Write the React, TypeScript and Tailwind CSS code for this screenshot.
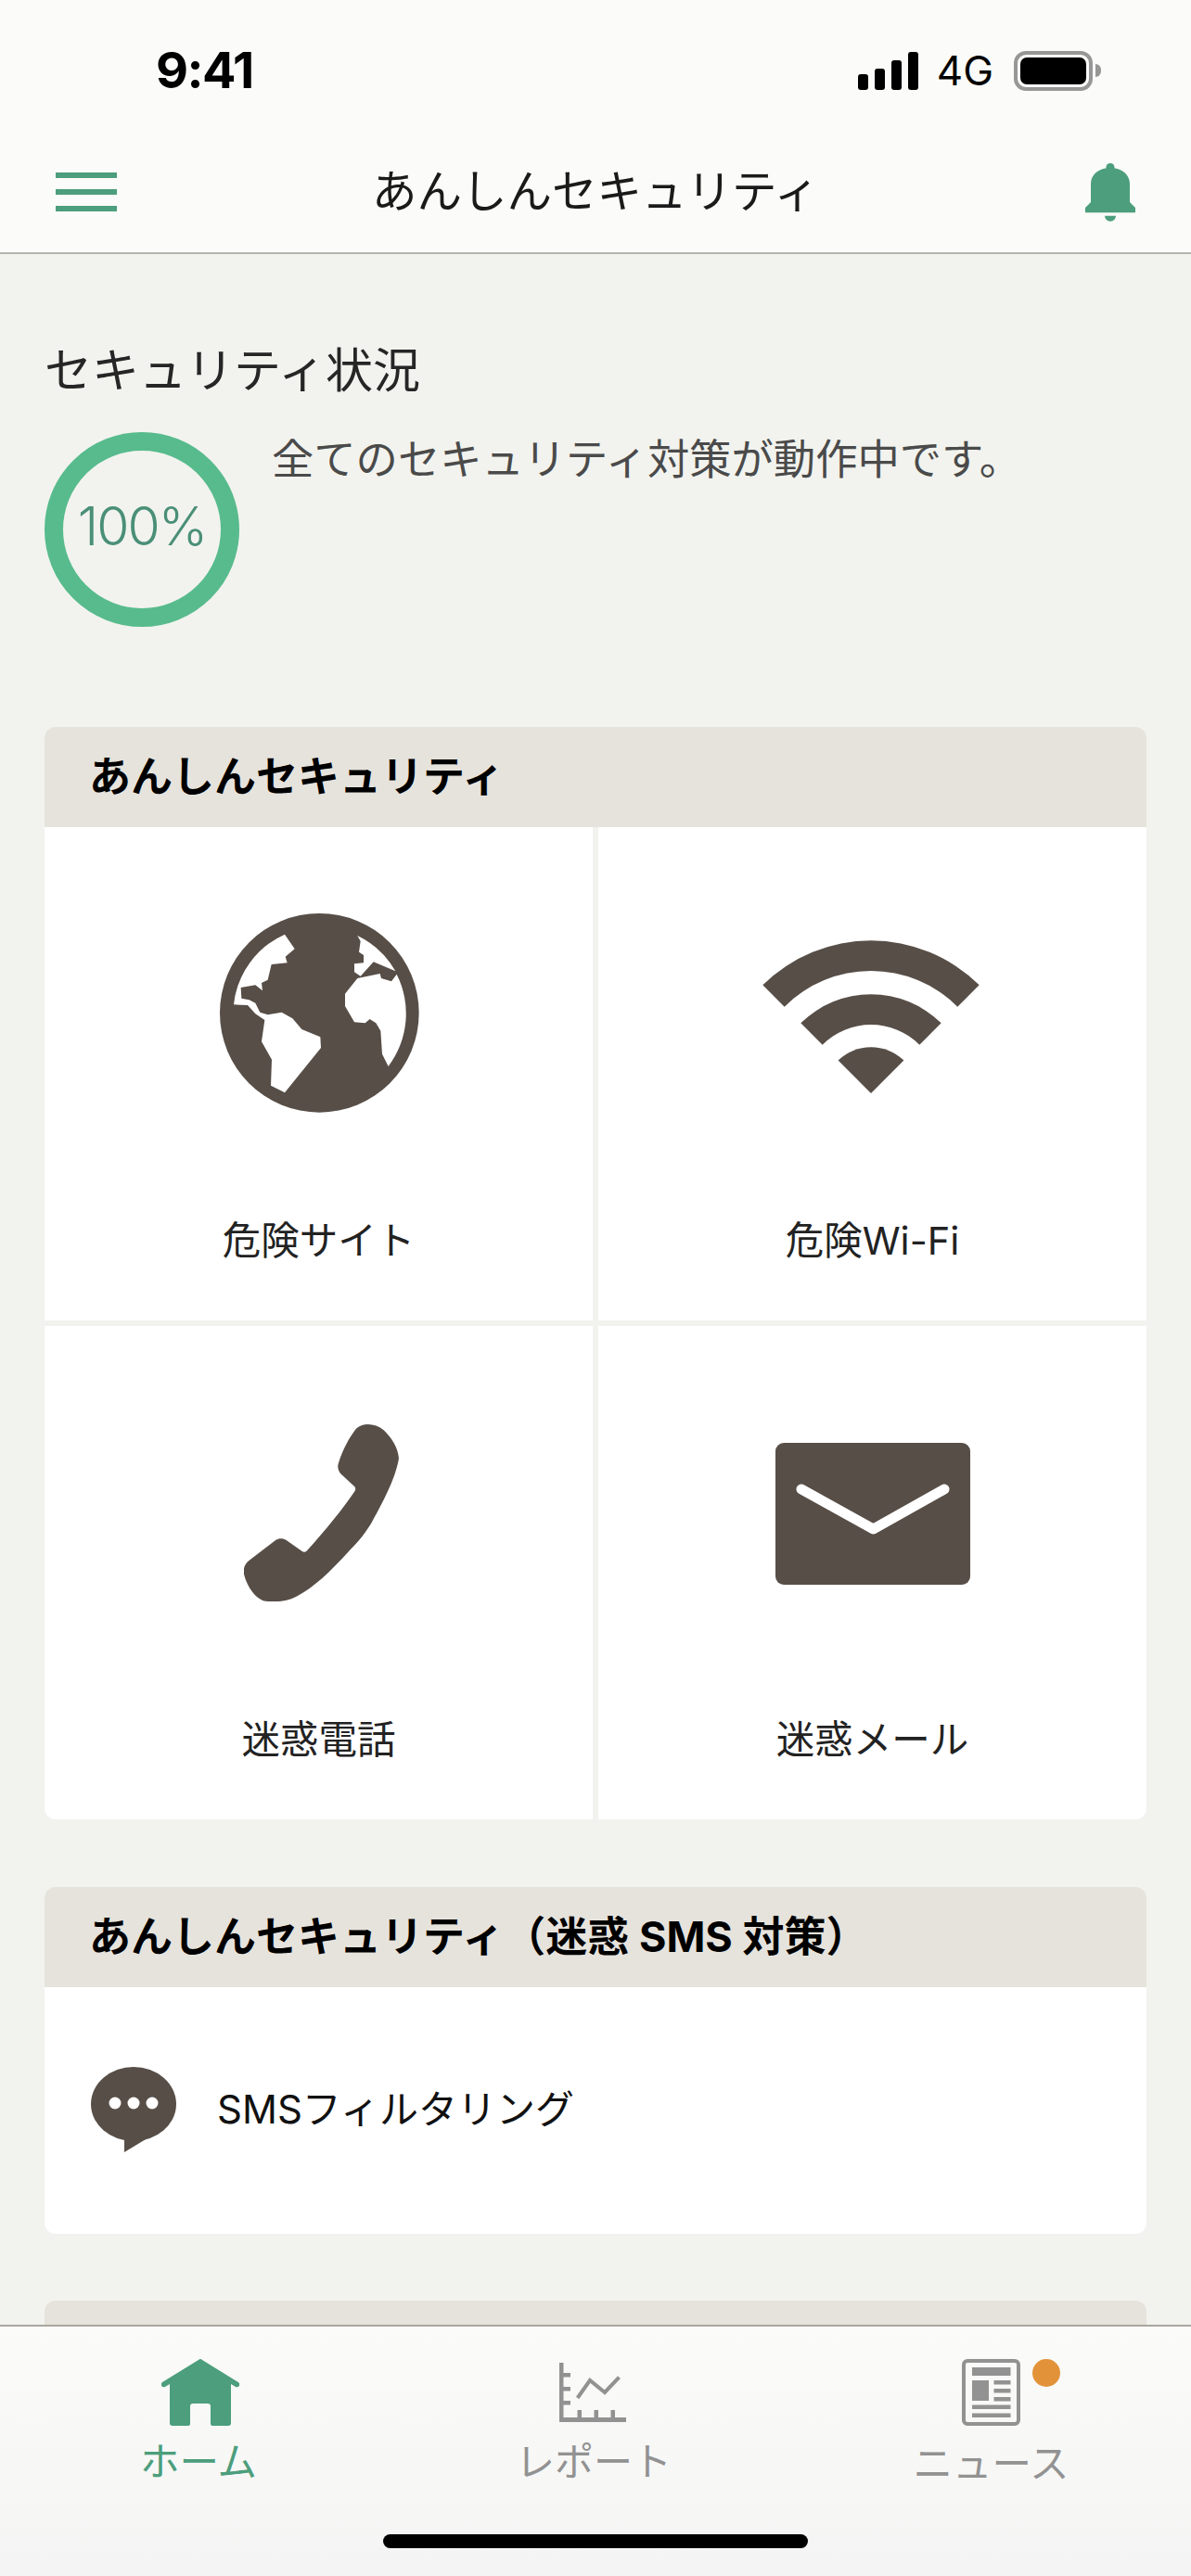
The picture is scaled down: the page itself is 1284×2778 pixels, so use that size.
import React from 'react';

const BROWN = '#574e47';
const GREEN = '#4c9e7c';
const GRAY = '#929292';

const GlobeIcon = () => (
  <svg width={215} height={215} viewBox="110 75 645 645" className="ml-[2px]">
    <circle cx={432} cy={397} r={322} fill={BROWN} />
    {/* Americas */}
    <path
      fill="#fff"
      d="M320 143 L352 190 L322 215 L328 235 L277 240 L265 290 L245 300 L248 325 L225 307 L178 315 L180 350 L205 355 L225 365 L240 395 L265 403 L310 395 L345 415 L375 450 L435 475 L437 510 L320 655 L275 632 L278 548 L245 490 L255 420 L225 400 L200 372 L155 370 A281 281 0 0 1 320 143Z"
    />
    {/* Europe */}
    <path
      fill="#fff"
      d="M555 147 A281 281 0 0 1 678 262 L607 232 L565 278 L545 265 L545 238 L575 235 L575 210 L560 200 L565 165Z"
    />
    {/* Africa */}
    <path
      fill="#fff"
      d="M682 272 L665 295 L632 285 L628 270 L555 285 L515 335 L515 375 L545 427 L580 430 L595 417 L615 430 L630 455 L635 530 L655 570 A283 283 0 0 0 682 272Z"
    />
  </svg>
);

const WifiIcon = () => (
  <svg width={234} height={166} viewBox="-117 -166 234 166" fill={BROWN} className="mt-[7px] mr-[3px]">
    <path d="M-116.7 -116.7 A166 166 0 0 1 116.7 -116.7 L93.3 -93.3 A132 132 0 0 0 -93.3 -93.3Z" />
    <path d="M-75.7 -75.7 A108 108 0 0 1 75.7 -75.7 L52.3 -52.3 A74 74 0 0 0 -52.3 -52.3Z" />
    <path d="M0 0 L-35.4 -35.4 A51 51 0 0 1 35.4 -35.4Z" />
  </svg>
);

const PhoneIcon = () => (
  <svg width={167} height={192} viewBox="68 48 500 574" fill={BROWN} className="ml-[5px]">
    <path d="M430 65 C450 45 490 45 520 70 C545 95 565 125 568 160 C560 210 535 270 478 372 C448 420 425 442 405 462 C345 528 295 575 240 605 C215 620 170 628 130 620 C105 610 80 580 68 535 C64 515 72 500 85 490 L170 425 C180 418 195 418 205 425 L255 460 C262 465 268 463 272 458 C330 395 390 320 425 268 C430 260 428 254 423 250 L380 210 C372 200 370 190 372 180 C385 135 410 90 430 65Z" />
  </svg>
);

const MailIcon = () => (
  <svg width={210} height={153} viewBox="0 0 210 153" className="mt-[3px]">
    <rect width={210} height={153} rx={9} fill={BROWN} />
    <path d="M28 50 L105.5 93 L182 50" fill="none" stroke="#fff" strokeWidth={11} strokeLinecap="round" strokeLinejoin="round" />
  </svg>
);

const ChatIcon = () => (
  <svg width={92} height={92} viewBox="0 0 92 92" className="shrink-0">
    <ellipse cx={46} cy={40} rx={46} ry={40} fill={BROWN} />
    <path d="M36 74 V92 L74 69Z" fill={BROWN} />
    <circle cx={26} cy={39} r={6.5} fill="#fff" />
    <circle cx={46} cy={39} r={6.5} fill="#fff" />
    <circle cx={66} cy={39} r={6.5} fill="#fff" />
  </svg>
);

const BellIcon = () => (
  <svg width={54} height={63} viewBox="0 0 54 63" fill={GREEN}>
    <circle cx={27} cy={4.5} r={4.5} />
    <path d="M6 42 V22 C6 12 15 5 27 5 C39 5 48 12 48 22 V42 L54 48 V53.3 H0 V48Z" />
    <path d="M21 56.7 H33 A6 6 0 0 1 21 56.7Z" />
  </svg>
);

const HomeIcon = () => (
  <svg width={84} height={72} viewBox="0 0 84 72" fill={GREEN} className="ml-[4px]">
    <path d="M42 0 Q43 0 44 1 L83 25 Q85 27 84 29 Q82 31 80 30 L75 27 V69 Q75 72 72 72 H55 Q53 72 53 70 V51 Q53 48 50 48 H34 Q31 48 31 51 V70 Q31 72 29 72 H12 Q9 72 9 69 V27 L4 30 Q2 31 0 29 Q-1 27 1 25 L40 1 Q41 0 42 0Z" />
  </svg>
);

const ChartIcon = () => (
  <svg width={72} height={64} viewBox="0 0 72 64" fill={GRAY} className="mr-[3px]">
    <rect width={4.5} height={64} />
    <rect y={59} width={72} height={5} />
    <rect y={11} width={12} height={4.5} />
    <rect y={26} width={12} height={4.5} />
    <rect y={41} width={12} height={4.5} />
    <rect x={19.5} y={51} width={4.5} height={9} />
    <rect x={37.5} y={51} width={4.5} height={9} />
    <rect x={55.5} y={51} width={4.5} height={9} />
    <path d="M19.6 38 L33 19 L49 32 L64.5 15.7" fill="none" stroke={GRAY} strokeWidth={4} />
  </svg>
);

const NewsIcon = () => (
  <svg width={63} height={72} viewBox="0 0 63 72" fill={GRAY}>
    <rect x={2} y={2} width={59} height={68} rx={4} fill="none" stroke={GRAY} strokeWidth={4} />
    <rect x={11} y={9} width={41.5} height={9} />
    <rect x={11} y={23} width={18} height={22} />
    <rect x={34.5} y={23} width={18} height={4.5} />
    <rect x={34.5} y={32} width={18} height={4.5} />
    <rect x={34.5} y={41} width={18} height={4.5} />
    <rect x={11} y={49.5} width={41.5} height={4.5} />
    <rect x={11} y={58.5} width={41.5} height={4.5} />
  </svg>
);

const tiles = [
  { label: '危険サイト', icon: GlobeIcon },
  { label: '危険Wi-Fi', icon: WifiIcon },
  { label: '迷惑電話', icon: PhoneIcon },
  { label: '迷惑メール', icon: MailIcon },
];

const SectionHeader = ({ title }: { title: string }) => (
  <div className="h-[108px] shrink-0 bg-[#e6e3dd] pl-[48px] flex items-center text-[45px] leading-[60px] font-bold text-black">
    {title}
  </div>
);

const App = () => {
  return (
    <div
      lang="ja"
      className="w-[1284px] h-[2778px] overflow-hidden flex flex-col bg-[#f2f3ee] font-['Inter','Noto_Sans_CJK_JP',sans-serif]"
    >
      {/* Status bar + nav */}
      <header className="h-[274px] shrink-0 bg-[#fbfbf9] border-b-2 border-[#b5b5b0]">
        <div className="h-[52px] mt-[50px] pl-[168px] pr-[97px] flex items-center justify-between">
          <span className="text-[54px] leading-[52px] font-bold text-black tracking-[-1.5px]">9:41</span>
          <div className="flex items-center">
            <div className="flex items-end gap-[7px] h-[41px]">
              <div className="w-[11px] h-[17px] rounded-[3px] bg-black" />
              <div className="w-[11px] h-[23px] rounded-[3px] bg-black" />
              <div className="w-[11px] h-[32px] rounded-[3px] bg-black" />
              <div className="w-[11px] h-[41px] rounded-[3px] bg-black" />
            </div>
            <span className="ml-[20px] text-[44px] leading-[52px] text-black">4G</span>
            <div className="ml-[22px] w-[85px] h-[43px] rounded-[13px] border-[4px] border-[#979797] p-[3px]">
              <div className="w-full h-full rounded-[7px] bg-black" />
            </div>
            <div className="ml-[3px] w-[6px] h-[14px] rounded-r-full bg-[#979797]" />
          </div>
        </div>
        <div className="h-[114px] mt-[48px] px-[60px] grid grid-cols-[1fr_auto_1fr] items-center">
          <div className="flex flex-col gap-[12px] w-[66px]">
            <div className="h-[6px] bg-[#4c9e7c]" />
            <div className="h-[6px] bg-[#4c9e7c]" />
            <div className="h-[6px] bg-[#4c9e7c]" />
          </div>
          <h1 className="text-[48.5px] leading-[60px] font-normal text-[#1a1a1a]">あんしんセキュリティ</h1>
          <div className="justify-self-end">
            <BellIcon />
          </div>
        </div>
      </header>

      <main className="flex-1 min-h-0 overflow-hidden px-[48px] pt-[96px]">
        {/* Security status */}
        <h2 className="text-[51px] leading-[60px] font-normal text-[#262626]">セキュリティ状況</h2>
        <div className="mt-[36px] mb-[108px] flex items-start gap-[35px]">
          <div className="w-[210px] h-[210px] shrink-0 rounded-full border-[20px] border-[#58bb8d] flex items-center justify-center">
            <span className="text-[57px] leading-[60px] font-[350] text-[#4a8f78] tracking-[-2px] -mt-[6px]">100%</span>
          </div>
          <p className="text-[45.3px] leading-[60px] text-[#4a4a4a]">全てのセキュリティ対策が動作中です。</p>
        </div>

        {/* Main features */}
        <section className="rounded-xl overflow-hidden">
          <SectionHeader title="あんしんセキュリティ" />
          <div className="grid grid-cols-2 gap-[6px]">
            {tiles.map((tile) => {
              const Icon = tile.icon;
              return (
                <div key={tile.label} className="h-[532px] bg-white pt-[93px] flex flex-col items-center">
                  <div className="h-[215px] flex items-center justify-center">
                    <Icon />
                  </div>
                  <div className="mt-[108px] text-[41.5px] leading-[60px] text-[#222222]">{tile.label}</div>
                </div>
              );
            })}
          </div>
        </section>

        {/* SMS */}
        <section className="mt-[73px] rounded-xl overflow-hidden">
          <SectionHeader title="あんしんセキュリティ（迷惑 SMS 対策）" />
          <div className="h-[266px] bg-white pl-[50px] pt-[86px] flex items-start gap-[44px]">
            <ChatIcon />
            <span className="mt-[16px] text-[42px] leading-[60px] text-[#111111]">SMSフィルタリング</span>
          </div>
        </section>

        {/* Next section, cut off by the tab bar */}
        <section className="mt-[72px] rounded-xl overflow-hidden">
          <div className="h-[108px] bg-[#e6e3dd]" />
        </section>
      </main>

      {/* Tab bar */}
      <nav className="h-[271px] shrink-0 border-t-2 border-[#aaa69f] bg-gradient-to-b from-[#fbfbf9] to-[#f4f4f4]">
        <div className="grid grid-cols-3 pt-[35px]">
          <div className="flex flex-col items-center">
            <div className="h-[72px] flex items-center"><HomeIcon /></div>
            <span className="mt-[9px] text-[42.5px] leading-[60px] text-[#4c9e7c]">ホーム</span>
          </div>
          <div className="flex flex-col items-center pr-[4px]">
            <div className="h-[72px] flex items-center"><ChartIcon /></div>
            <span className="mt-[9px] text-[42px] leading-[60px] text-[#929292]">レポート</span>
          </div>
          <div className="flex flex-col items-center pr-[3px]">
            <div className="relative h-[72px] flex items-center">
              <NewsIcon />
              <div className="absolute left-[76px] top-0 w-[30px] h-[30px] rounded-full bg-[#e2933a]" />
            </div>
            <span className="mt-[11px] text-[42.5px] leading-[60px] text-[#929292]">ニュース</span>
          </div>
        </div>
        <div className="mt-[46px] mx-auto w-[458px] h-[15px] rounded-full bg-black" />
      </nav>
    </div>
  );
};

export default App;
